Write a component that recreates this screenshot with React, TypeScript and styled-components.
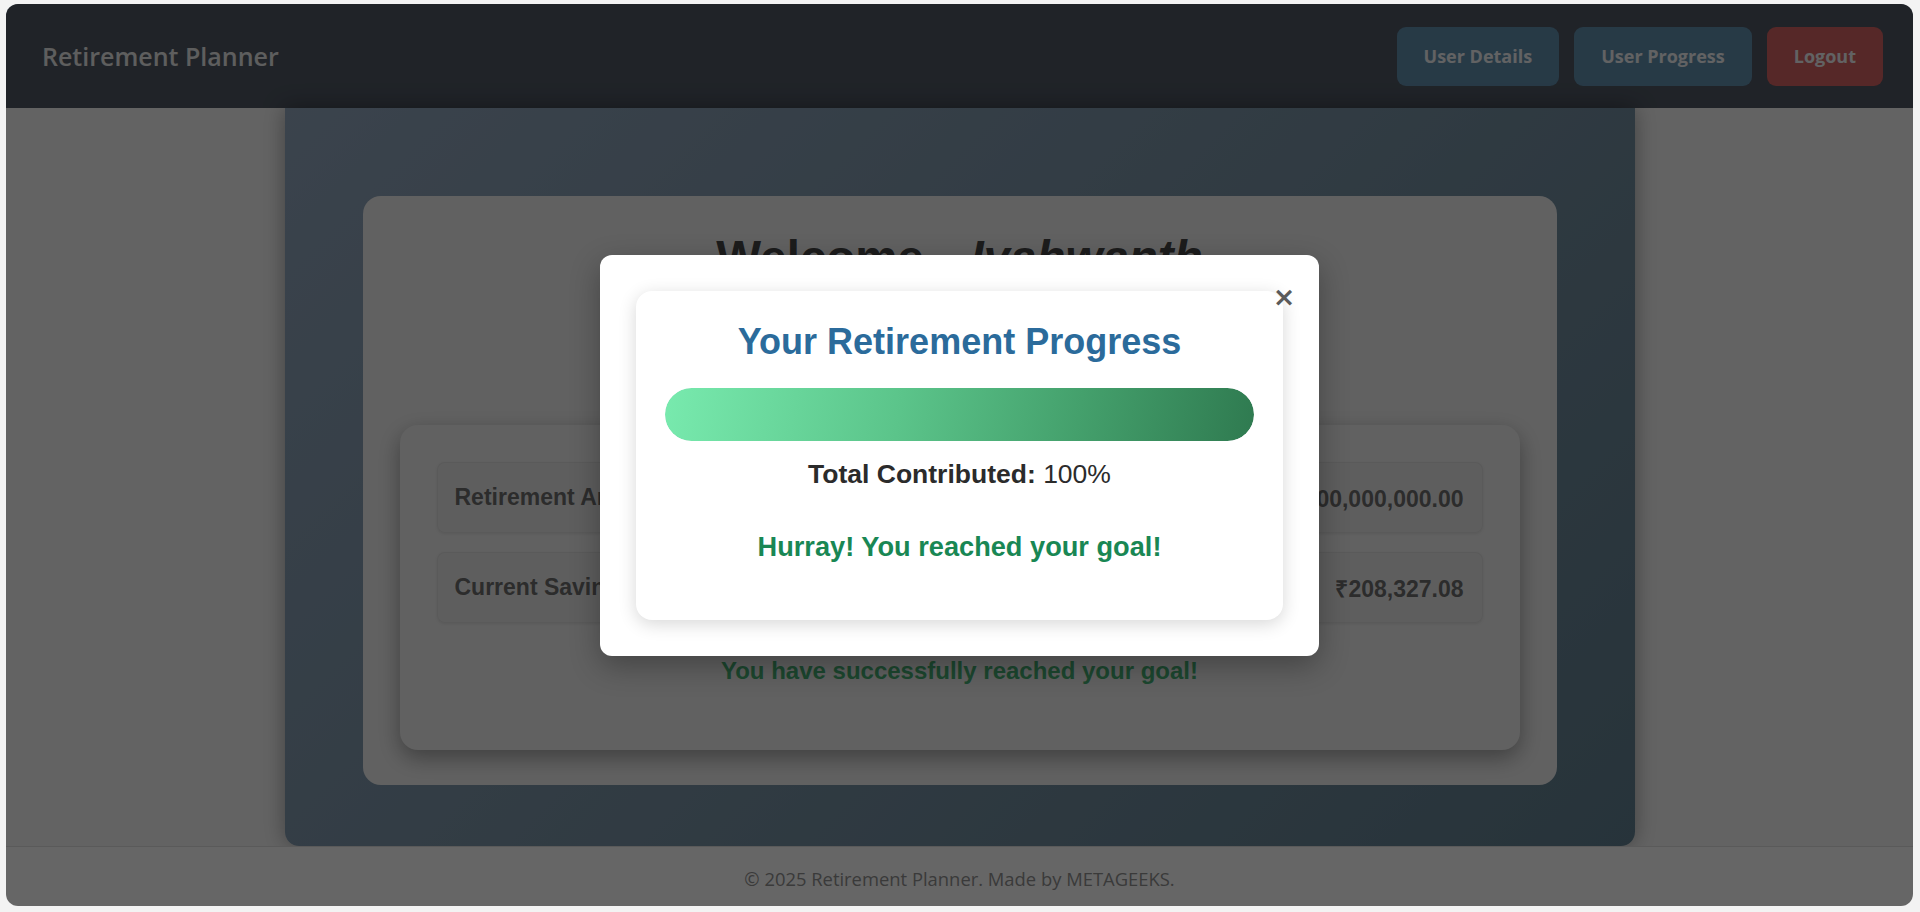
import React from "react";
import styled, { createGlobalStyle } from "styled-components";

const GlobalStyle = createGlobalStyle`
  html, body {
    margin: 0;
    padding: 0;
  }
  body {
    background: #f3f3f3;
    padding: 4px 7px 6px 6px;
    box-sizing: border-box;
    height: 100vh;
    font-family: "Liberation Sans", Arial, sans-serif;
  }
  * { box-sizing: border-box; }
`;

const Frame = styled.div`
  position: relative;
  height: 902px;
  border-radius: 12px;
  overflow: hidden;
  display: flex;
  flex-direction: column;
  background: #f8f8f8;
`;

const NavBar = styled.header`
  height: 104px;
  flex: 0 0 104px;
  background: #505864;
  display: flex;
  align-items: center;
  justify-content: space-between;
  padding: 0 30px 0 36px;
`;

const Brand = styled.div`
  font-family: "Open Sans", "Noto Sans", sans-serif;
  font-weight: 600;
  font-size: 25px;
  color: #ececec;
`;

const NavActions = styled.nav`
  display: flex;
  gap: 15px;
`;

const NavButton = styled.button<{ $danger?: boolean }>`
  border: none;
  border-radius: 9px;
  height: 59px;
  padding: 0 27px;
  font-family: "Open Sans", "Noto Sans", sans-serif;
  font-weight: 700;
  font-size: 18px;
  color: #f4f6f8;
  background: ${(p) => (p.$danger ? "#d66464" : "#6291b0")};
  cursor: pointer;
`;

const Main = styled.main`
  flex: 1;
  display: flex;
  justify-content: center;
`;

const Panel = styled.section`
  width: 1350px;
  background: linear-gradient(135deg, #93a8bf 0%, #7b95a8 50%, #628192 100%);
  border-radius: 0 0 14px 14px;
  padding: 88px 78px 60px;
  box-shadow: 0 0 22px rgba(0, 0, 0, 0.35);
`;

const WelcomeCard = styled.div`
  background: #f3f3f3;
  border-radius: 18px;
  padding: 33px 37px 35px;
  display: flex;
  flex-direction: column;
  align-items: center;
`;

const Welcome = styled.h1`
  margin: 0;
  font-family: "Liberation Sans", Arial, sans-serif;
  font-size: 47.5px;
  line-height: 1.2;
  font-weight: 700;
  color: #464646;
  em {
    margin-left: 20px;
  }
`;

const StatsCard = styled.div`
  margin-top: 139px;
  align-self: stretch;
  background: #f2f2f2;
  border-radius: 18px;
  padding: 37px 37px 65px;
  box-shadow: 0 8px 22px rgba(0, 0, 0, 0.35);
  display: flex;
  flex-direction: column;
  gap: 19px;
`;

const StatRow = styled.div`
  height: 71px;
  display: flex;
  align-items: center;
  justify-content: space-between;
  padding: 0 19px 0 18px;
  background: #ececec;
  border-radius: 8px;
  box-shadow: inset 0 0 0 1px #e1e1e1, 0 1px 3px rgba(0, 0, 0, 0.08);
  font-family: "Liberation Sans", Arial, sans-serif;
  font-weight: 700;
  font-size: 23px;
  color: #6f6f6f;
`;

const SuccessNote = styled.p`
  margin: 14px 0 0;
  text-align: center;
  font-family: "Liberation Sans", Arial, sans-serif;
  font-weight: 700;
  font-size: 24px;
  line-height: 29px;
  color: #48b176;
`;

const Footer = styled.footer`
  flex: 0 0 60px;
  background: #ffffff;
  border-top: 1px solid #e2e2e2;
  display: flex;
  align-items: center;
  justify-content: center;
  padding-top: 4px;
  font-family: "Open Sans", "Noto Sans", sans-serif;
  font-size: 18.4px;
  color: #929292;
`;

const Overlay = styled.div`
  position: absolute;
  inset: 0;
  background: rgba(0, 0, 0, 0.6);
  display: flex;
  align-items: center;
  justify-content: center;
`;

const Modal = styled.div`
  position: relative;
  width: 719px;
  padding: 36px;
  background: #ffffff;
  border-radius: 12px;
  box-shadow: 0 10px 30px rgba(0, 0, 0, 0.3);
`;

const CloseButton = styled.button`
  position: absolute;
  top: 29px;
  right: 22px;
  width: 26px;
  height: 26px;
  padding: 0;
  border: none;
  background: transparent;
  color: #5a5a5a;
  font-family: "DejaVu Sans", sans-serif;
  font-size: 27px;
  font-weight: 700;
  line-height: 26px;
  cursor: pointer;
`;

const ProgressCard = styled.div`
  background: #ffffff;
  border-radius: 16px;
  padding: 30px 29px 58px;
  box-shadow: 0 4px 18px rgba(0, 0, 0, 0.16);
  display: flex;
  flex-direction: column;
  align-items: stretch;
  text-align: center;
`;

const ProgressTitle = styled.h2`
  margin: 0;
  font-family: "Liberation Sans", Arial, sans-serif;
  font-size: 36px;
  line-height: 42px;
  font-weight: 700;
  color: #2b6b9b;
`;

const Track = styled.div`
  margin-top: 25px;
  height: 53px;
  border-radius: 27px;
  background: #e9ecef;
  overflow: hidden;
`;

const Fill = styled.div`
  height: 100%;
  border-radius: 27px;
  background: linear-gradient(100deg, #78eaae 0%, #5bc48a 40%, #44a06c 70%, #2f7a50 100%);
`;

const Contributed = styled.p`
  margin: 18px 0 0;
  font-family: "Liberation Sans", Arial, sans-serif;
  font-size: 26.5px;
  line-height: 30px;
  color: #2b2b2b;
  strong {
    font-weight: 700;
  }
`;

const Hurray = styled.p`
  margin: 43px 0 0;
  font-family: "Liberation Sans", Arial, sans-serif;
  font-size: 27.2px;
  line-height: 30px;
  font-weight: 700;
  color: #198754;
`;

export default function App() {
  const percent = 100;
  return (
    <>
      <GlobalStyle />
      <Frame>
        <NavBar>
          <Brand>Retirement Planner</Brand>
          <NavActions>
            <NavButton>User Details</NavButton>
            <NavButton>User Progress</NavButton>
            <NavButton $danger>Logout</NavButton>
          </NavActions>
        </NavBar>
        <Main>
          <Panel>
            <WelcomeCard>
              <Welcome>
                Welcome, <em>Iyahwanth</em>
              </Welcome>
              <StatsCard>
                <StatRow>
                  <span>Retirement Amount Needed:</span>
                  <span>₹100,000,000.00</span>
                </StatRow>
                <StatRow>
                  <span>Current Savings:</span>
                  <span>₹208,327.08</span>
                </StatRow>
                <SuccessNote>You have successfully reached your goal!</SuccessNote>
              </StatsCard>
            </WelcomeCard>
          </Panel>
        </Main>
        <Footer>© 2025 Retirement Planner. Made by METAGEEKS.</Footer>
        <Overlay>
          <Modal>
            <CloseButton aria-label="Close">×</CloseButton>
            <ProgressCard>
              <ProgressTitle>Your Retirement Progress</ProgressTitle>
              <Track>
                <Fill style={{ width: `${percent}%` }} />
              </Track>
              <Contributed>
                <strong>Total Contributed:</strong> {percent}%
              </Contributed>
              <Hurray>Hurray! You reached your goal!</Hurray>
            </ProgressCard>
          </Modal>
        </Overlay>
      </Frame>
    </>
  );
}
